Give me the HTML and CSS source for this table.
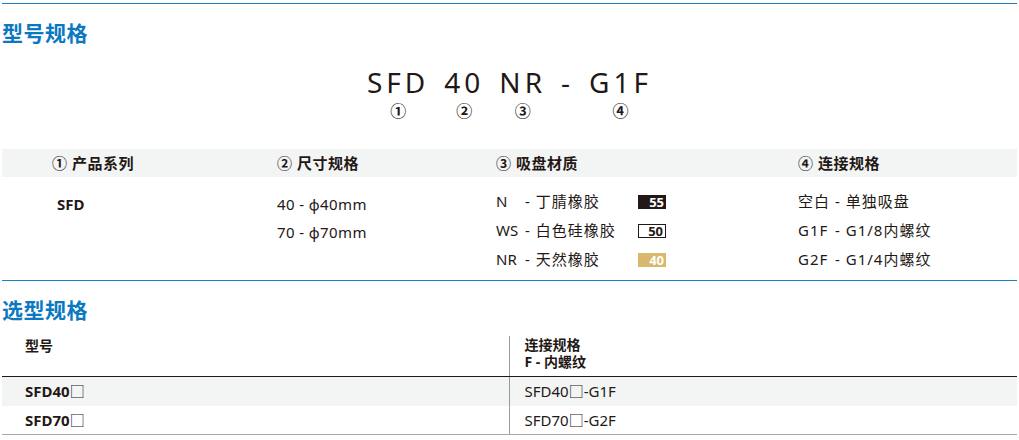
FILE: index.html
```html
<!DOCTYPE html>
<html lang="zh-CN">
<head>
<meta charset="utf-8">
<title>型号规格</title>
<link rel="stylesheet" href="styles.css">
</head>
<body>
<div class="page">
  <h2 class="sec-title">型号规格</h2>

  <div class="code">
    <div class="code-part"><span class="code-text">SFD</span><span class="code-num">①</span></div>
    <div class="code-part"><span class="code-text">40</span><span class="code-num">②</span></div>
    <div class="code-part"><span class="code-text">NR</span><span class="code-num">③</span></div>
    <div class="code-part"><span class="code-text">-</span><span class="code-num"></span></div>
    <div class="code-part"><span class="code-text">G1F</span><span class="code-num">④</span></div>
  </div>

  <div class="spec">
    <div class="spec-head">
      <div>① 产品系列</div>
      <div>② 尺寸规格</div>
      <div>③ 吸盘材质</div>
      <div>④ 连接规格</div>
    </div>
    <div class="spec-body">
      <div class="col col-a"><div class="series">SFD</div></div>
      <div class="col col-a">
        <div>40 - ϕ40mm</div>
        <div>70 - ϕ70mm</div>
      </div>
      <div class="col">
        <div class="mat"><span class="mat-code">N</span><span class="mat-name">- 丁腈橡胶</span><span class="badge badge-dark">55</span></div>
        <div class="mat"><span class="mat-code">WS</span><span class="mat-name">- 白色硅橡胶</span><span class="badge badge-line">50</span></div>
        <div class="mat"><span class="mat-code">NR</span><span class="mat-name">- 天然橡胶</span><span class="badge badge-gold">40</span></div>
      </div>
      <div class="col conn">
        <div class="conn-row"><span class="conn-code">空白</span><span>- 单独吸盘</span></div>
        <div class="conn-row"><span class="conn-code">G1F</span><span>- G1/8内螺纹</span></div>
        <div class="conn-row"><span class="conn-code">G2F</span><span>- G1/4内螺纹</span></div>
      </div>
    </div>
  </div>

  <h2 class="sec-title sec-two">选型规格</h2>

  <table class="sel">
    <thead>
      <tr>
        <th class="c1"><span class="c1-head">型号</span></th>
        <th class="c2"><span class="hl">连接规格</span><span class="hl">F - 内螺纹</span></th>
      </tr>
    </thead>
    <tbody>
      <tr class="shade">
        <td class="c1">SFD40<span class="box">□</span></td>
        <td class="c2">SFD40□-G1F</td>
      </tr>
      <tr>
        <td class="c1">SFD70<span class="box">□</span></td>
        <td class="c2">SFD70□-G2F</td>
      </tr>
    </tbody>
  </table>
</div>
</body>
</html>
```

FILE: styles.css
```css
* { box-sizing: border-box; }

body {
  margin: 0;
  background: #fff;
  color: #231815;
  font-family: "Noto Sans", "Noto Sans CJK SC", sans-serif;
}

.page {
  margin: 3px 2px 0 2px;
  border-top: 1px solid #1f7bbd;
  width: 1015px;
}

.sec-title {
  margin: 16px 0 0;
  font-family: "Noto Sans CJK SC", sans-serif;
  font-size: 21px;
  line-height: 24px;
  font-weight: 700;
  color: #0b78c2;
  letter-spacing: 0.5px;
}

.sec-two { margin-top: 16px; }

.code {
  display: flex;
  justify-content: center;
  gap: 15px;
  margin-top: 22px;
}

.code-part {
  display: flex;
  flex-direction: column;
  align-items: center;
}

.code-text {
  font-family: "Noto Sans", sans-serif;
  font-size: 28px;
  line-height: 32px;
  letter-spacing: 4px;
  color: #231815;
}

.code-num {
  margin-top: 4px;
  height: 17px;
  font-family: "Noto Sans CJK SC", sans-serif;
  font-size: 16px;
  line-height: 17px;
  font-weight: 700;
}

.spec { margin-top: 30px; }

.spec-head,
.spec-body {
  display: grid;
  grid-template-columns: 225px 219px 302px 1fr;
  padding-left: 50px;
}

.spec-head {
  background: #f3f5f4;
  height: 28px;
  line-height: 28px;
  font-size: 15px;
  font-weight: 700;
  letter-spacing: 0.5px;
}

.spec-body {
  height: 104px;
  padding-top: 10px;
  border-bottom: 1px solid #1a80c8;
  font-size: 15px;
  line-height: 29px;
}

.col-a {
  padding-top: 3px;
  line-height: 28px;
  letter-spacing: 0.4px;
}

.series {
  font-weight: 700;
  padding-left: 5px;
  letter-spacing: 0;
}

.mat {
  display: flex;
  align-items: center;
  height: 29px;
}

.mat-code {
  width: 29px;
  flex: none;
}

.mat-name {
  width: 113px;
  flex: none;
  letter-spacing: 1px;
}

.badge {
  width: 28px;
  height: 14px;
  font-size: 13px;
  line-height: 14px;
  font-weight: 700;
  text-align: right;
  padding-right: 2px;
}

.badge-dark { background: #231815; color: #fff; }
.badge-line { border: 1px solid #231815; color: #231815; line-height: 12px; }
.badge-gold { background: #d8b96b; color: #fff; }

.conn-row {
  display: flex;
  height: 29px;
  align-items: center;
  letter-spacing: 1px;
}

.conn-code {
  width: 37px;
  flex: none;
}

.sel {
  margin-top: 15px;
  width: 100%;
  border-collapse: collapse;
  font-size: 15px;
}

.sel th {
  text-align: left;
  font-weight: 700;
  font-size: 14px;
  vertical-align: top;
  padding: 0 0 6px;
  border-bottom: 1px solid #231815;
}

.hl {
  display: block;
  height: 17px;
  line-height: 17px;
}

.sel .c1 {
  width: 507px;
  padding-left: 23px;
}

.sel .c2 {
  border-left: 1px solid #9a9a9a;
  padding-left: 15px;
}

.c1-head {
  display: block;
  padding-top: 1px;
  line-height: 17px;
}

.sel td {
  height: 28px;
  line-height: 28px;
  padding-top: 0;
  padding-bottom: 0;
}

.sel td.c1 { font-weight: 700; }

.box { font-weight: 400; }

.sel tbody tr.shade td { background: #f3f5f4; height: 29px; }

.sel tbody tr:last-child td { border-bottom: 1px solid #a8a8a8; }
```
